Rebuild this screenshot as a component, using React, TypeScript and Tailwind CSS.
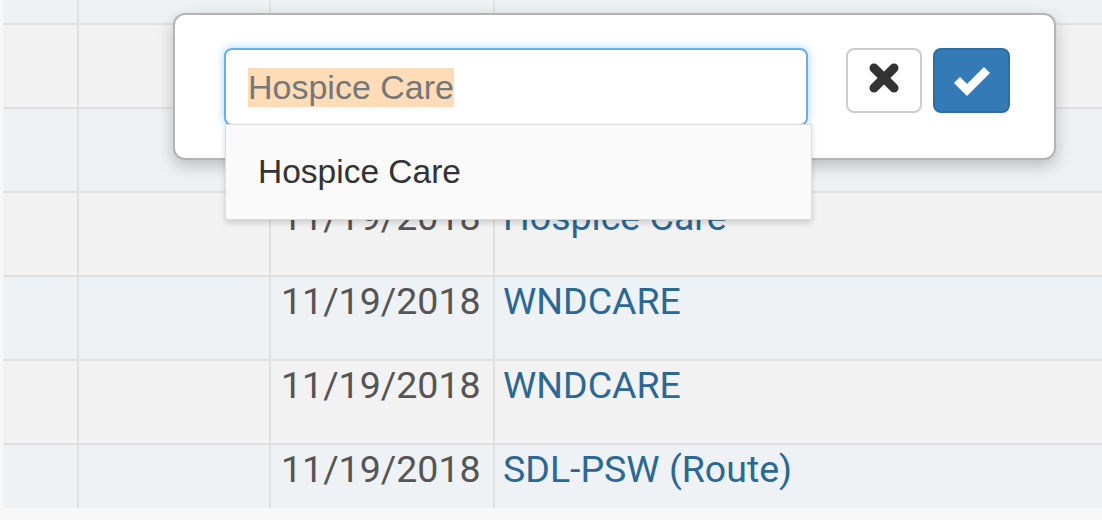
import React from "react";

type Row = { bg: string; h: string; date?: string; name?: string; last?: boolean };

const rows: Row[] = [
  { bg: "bg-[#eef2f5]", h: "h-[25px]" },
  { bg: "bg-[#f2f2f2]", h: "h-[84px]" },
  { bg: "bg-[#eef2f5]", h: "h-[84px]" },
  { bg: "bg-[#f2f2f2]", h: "h-[84px]", date: "11/19/2018", name: "Hospice Care" },
  { bg: "bg-[#eef2f5]", h: "h-[84px]", date: "11/19/2018", name: "WNDCARE" },
  { bg: "bg-[#f2f2f2]", h: "h-[84px]", date: "11/19/2018", name: "WNDCARE" },
  { bg: "bg-[#eef2f5]", h: "h-[63px]", date: "11/19/2018", name: "SDL-PSW (Route)", last: true },
];

function RemoveIcon() {
  return (
    <svg width="32" height="32" viewBox="0 0 32 32" className="-mt-[6px]">
      <path d="M6 6 L26 26 M26 6 L6 26" stroke="#333" strokeWidth="9" strokeLinecap="round" fill="none" />
    </svg>
  );
}

function OkIcon() {
  return (
    <svg width="40" height="34" viewBox="0 0 40 34" className="-mt-[2px]">
      <polyline points="5,17 15,27 35,7" stroke="#fff" strokeWidth="8.5" strokeLinejoin="miter" fill="none" />
    </svg>
  );
}

export default function App() {
  return (
    <div className="relative w-[1102px] h-[520px] overflow-hidden bg-[#f8f8f8] font-['Roboto',sans-serif]">
      <div className="ml-[3px] flex flex-col">
        {rows.map((r, i) => (
          <div
            key={i}
            className={`grid grid-cols-[76px_192px_224px_1fr] ${r.h} ${r.bg} ${r.last ? "" : "border-b-2 border-[#e0e0e0]"}`}
          >
            <div className="border-r-2 border-[#e0e0e0]" />
            <div className="border-r-2 border-[#e0e0e0]" />
            <div className="border-r-2 border-[#e0e0e0] pl-[10px] pt-[3px] text-[37.5px] leading-[42px] text-[#555]">
              {r.date}
            </div>
            <div className="pl-[8px] pt-[3px] text-[37.5px] leading-[42px] text-[#2b6894]">{r.name}</div>
          </div>
        ))}
      </div>

      <div className="absolute left-[173px] top-[13px] w-[883px] h-[147px] rounded-[12px] border-2 border-[#b4b4b4] bg-white shadow-[0_6px_16px_rgba(0,0,0,0.22)] font-['Liberation_Sans',Arial,sans-serif]">
        <div className="flex items-start pl-[49px] pt-[33px]">
          <div className="relative">
            <div className="flex items-center w-[584px] h-[78px] rounded-[8px] border-2 border-[#66afe9] bg-white pl-[22px] shadow-[0_0_10px_rgba(102,175,233,0.55)]">
              <span className="bg-[#fddcb7] text-[34px] leading-[39px] text-[#777]">Hospice Care</span>
            </div>
            <div className="absolute left-[1px] top-[76px] flex items-center w-[587px] h-[96px] border border-[#dcdcdc] bg-[#fafafa] pl-[32px] shadow-[0_3px_6px_rgba(0,0,0,0.15)]">
              <span className="text-[33.5px] text-[#333]">Hospice Care</span>
            </div>
          </div>
          <button className="ml-[38px] flex items-center justify-center w-[76px] h-[65px] rounded-[8px] border-2 border-[#cccccc] bg-white">
            <RemoveIcon />
          </button>
          <button className="ml-[11px] flex items-center justify-center w-[77px] h-[65px] rounded-[8px] border-2 border-[#2e6da4] bg-[#337ab7]">
            <OkIcon />
          </button>
        </div>
      </div>
    </div>
  );
}
